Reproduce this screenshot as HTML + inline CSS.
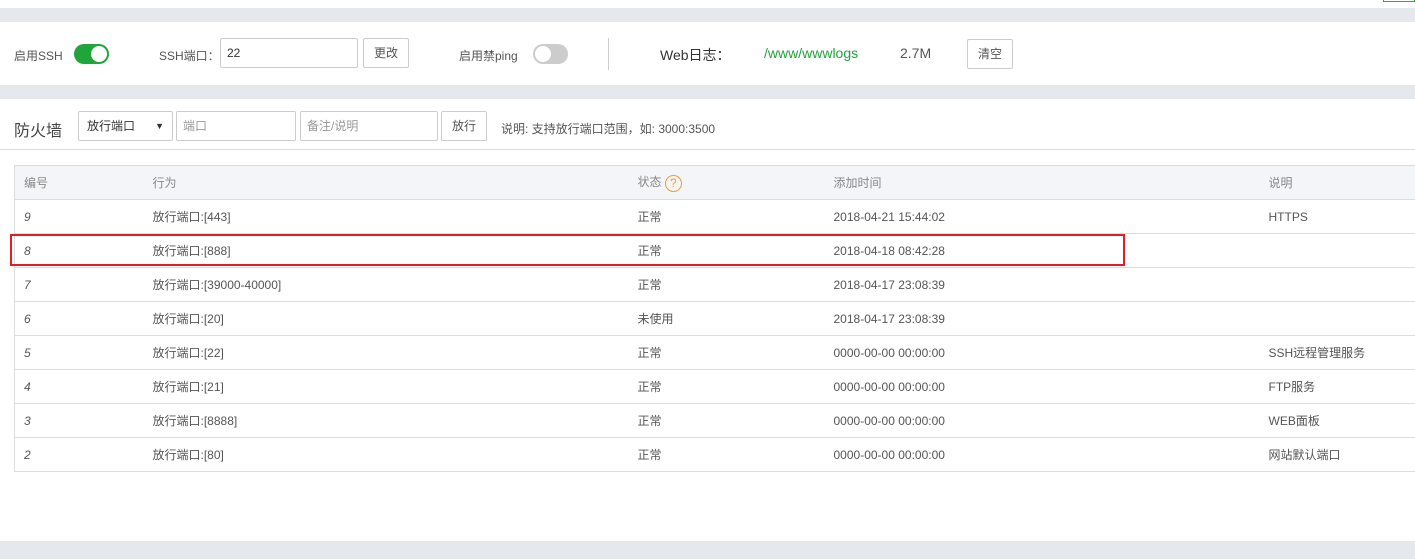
<!DOCTYPE html>
<html><head><meta charset="utf-8"><style>
*{margin:0;padding:0;box-sizing:border-box}
body{width:1415px;height:559px;background:#fff;font-family:"Liberation Sans","Noto Sans CJK SC",sans-serif;font-size:12px;color:#555;position:relative;overflow:hidden}
.band{position:absolute;left:0;width:1415px;background:#e5e8ec}
.a{position:absolute;white-space:nowrap}
.inp{position:absolute;border:1px solid #ccc;border-radius:2px;background:#fff;padding-left:6px;color:#999}
.btn{position:absolute;border:1px solid #ccc;border-radius:2px;background:#fff;text-align:center;color:#555}
table{position:absolute;left:14px;top:165px;width:1401px;border-collapse:collapse}
td{height:34px;border:1px solid #ddd;border-left:none;border-right:none;padding:0}
tr td:first-child{border-left:1px solid #ddd}
thead td{background:#f4f5f9;color:#888}
td.n{padding-left:9px;width:138px;font-style:italic}
</style></head><body>
<div class="band" style="top:8px;height:14px"></div>
<div style="position:absolute;right:0;top:0;width:32px;height:2px;border:1px solid #3a3;border-top:none"></div>
<div class="a" style="left:14px;top:47px">启用SSH</div>
<div class="a" style="left:74px;top:44px;width:35px;height:20px;border-radius:10px;background:#20a53a"><div style="position:absolute;right:2px;top:2px;width:16px;height:16px;border-radius:8px;background:#fff"></div></div>
<div class="a" style="left:159px;top:47px">SSH端口：</div>
<div class="inp" style="left:220px;top:38px;width:138px;height:30px;line-height:28px;color:#333">22</div>
<div class="btn" style="left:363px;top:38px;width:46px;height:30px;line-height:28px">更改</div>
<div class="a" style="left:459px;top:47px">启用禁ping</div>
<div class="a" style="left:533px;top:44px;width:35px;height:20px;border-radius:10px;background:#ccc"><div style="position:absolute;left:2px;top:2px;width:16px;height:16px;border-radius:8px;background:#fff"></div></div>
<div class="a" style="left:608px;top:38px;width:1px;height:32px;background:#ccc"></div>
<div class="a" style="left:660px;top:45px;font-size:14px;color:#333">Web日志：</div>
<div class="a" style="left:764px;top:45px;font-size:14px;color:#20a53a">/www/wwwlogs</div>
<div class="a" style="left:900px;top:45px;font-size:14px;color:#555">2.7M</div>
<div class="btn" style="left:967px;top:39px;width:46px;height:30px;line-height:28px">清空</div>
<div class="band" style="top:85px;height:14px"></div>
<div class="a" style="left:14px;top:117px;font-size:16px;color:#444">防火墙</div>
<div class="inp" style="left:78px;top:111px;width:95px;height:30px;line-height:28px;color:#333;padding-left:8px">放行端口<span style="position:absolute;right:8px;font-size:9px">▼</span></div>
<div class="inp" style="left:176px;top:111px;width:120px;height:30px;line-height:28px">端口</div>
<div class="inp" style="left:300px;top:111px;width:138px;height:30px;line-height:28px">备注/说明</div>
<div class="btn" style="left:441px;top:111px;width:46px;height:30px;line-height:28px">放行</div>
<div class="a" style="left:501px;top:120px;color:#555">说明: 支持放行端口范围，如: 3000:3500</div>
<div class="a" style="left:0;top:149px;width:1415px;height:1px;background:#ddd"></div>
<table>
<thead><tr><td class="n" style="font-style:normal">编号</td><td style="width:485px">行为</td><td style="width:196px">状态 <span style="display:inline-block;width:17px;height:17px;border:1.5px solid #f0a020;border-radius:50%;color:#f0a020;text-align:center;line-height:14px;font-size:12px;vertical-align:middle">?</span></td><td style="width:435px">添加时间</td><td>说明</td></tr></thead>
<tbody>
<tr><td class="n">9</td><td>放行端口:[443]</td><td>正常</td><td>2018-04-21 15:44:02</td><td>HTTPS</td></tr>
<tr><td class="n">8</td><td>放行端口:[888]</td><td>正常</td><td>2018-04-18 08:42:28</td><td></td></tr>
<tr><td class="n">7</td><td>放行端口:[39000-40000]</td><td>正常</td><td>2018-04-17 23:08:39</td><td></td></tr>
<tr><td class="n">6</td><td>放行端口:[20]</td><td>未使用</td><td>2018-04-17 23:08:39</td><td></td></tr>
<tr><td class="n">5</td><td>放行端口:[22]</td><td>正常</td><td>0000-00-00 00:00:00</td><td>SSH远程管理服务</td></tr>
<tr><td class="n">4</td><td>放行端口:[21]</td><td>正常</td><td>0000-00-00 00:00:00</td><td>FTP服务</td></tr>
<tr><td class="n">3</td><td>放行端口:[8888]</td><td>正常</td><td>0000-00-00 00:00:00</td><td>WEB面板</td></tr>
<tr><td class="n">2</td><td>放行端口:[80]</td><td>正常</td><td>0000-00-00 00:00:00</td><td>网站默认端口</td></tr>
</tbody></table>
<div class="a" style="left:10px;top:234px;width:1115px;height:32px;border:2px solid #e02020"></div>
<div class="band" style="top:541px;height:18px"></div>
</body></html>
